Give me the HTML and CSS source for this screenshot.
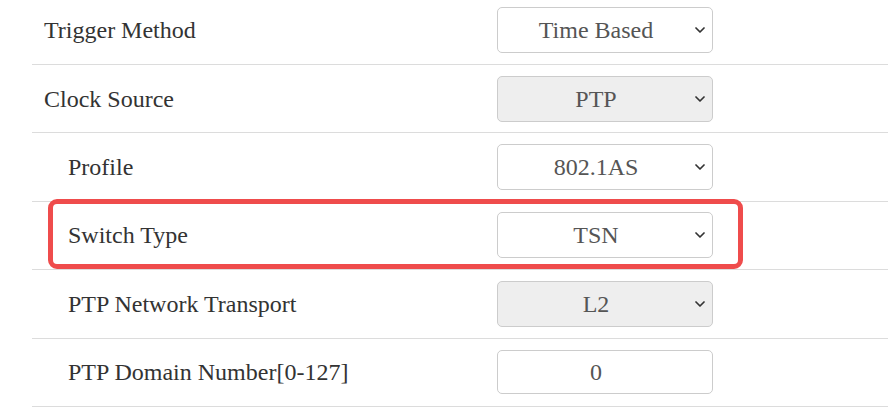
FILE: index.html
```html
<!DOCTYPE html>
<html>
<head>
<meta charset="utf-8">
<link rel="stylesheet" href="styles.css">
</head>
<body>
<div class="table">
  <div class="row">
    <div class="label">Trigger Method</div>
    <div class="field">
      <div class="select-wrap">
        <select class="select"><option>Time Based</option></select>
        <svg class="chev" viewBox="0 0 10 6" width="10" height="6"><path d="M1 1 L5 5 L9 1" fill="none" stroke="#333" stroke-width="1.7" stroke-linecap="round" stroke-linejoin="round"/></svg>
      </div>
    </div>
  </div>
  <div class="row">
    <div class="label">Clock Source</div>
    <div class="field">
      <div class="select-wrap">
        <select class="select disabled"><option>PTP</option></select>
        <svg class="chev" viewBox="0 0 10 6" width="10" height="6"><path d="M1 1 L5 5 L9 1" fill="none" stroke="#333" stroke-width="1.7" stroke-linecap="round" stroke-linejoin="round"/></svg>
      </div>
    </div>
  </div>
  <div class="row">
    <div class="label sub">Profile</div>
    <div class="field">
      <div class="select-wrap">
        <select class="select"><option>802.1AS</option></select>
        <svg class="chev" viewBox="0 0 10 6" width="10" height="6"><path d="M1 1 L5 5 L9 1" fill="none" stroke="#333" stroke-width="1.7" stroke-linecap="round" stroke-linejoin="round"/></svg>
      </div>
    </div>
  </div>
  <div class="row highlighted">
    <div class="label sub">Switch Type</div>
    <div class="field">
      <div class="select-wrap">
        <select class="select"><option>TSN</option></select>
        <svg class="chev" viewBox="0 0 10 6" width="10" height="6"><path d="M1 1 L5 5 L9 1" fill="none" stroke="#333" stroke-width="1.7" stroke-linecap="round" stroke-linejoin="round"/></svg>
      </div>
    </div>
    <div class="mark"></div>
  </div>
  <div class="row">
    <div class="label sub">PTP Network Transport</div>
    <div class="field">
      <div class="select-wrap">
        <select class="select disabled"><option>L2</option></select>
        <svg class="chev" viewBox="0 0 10 6" width="10" height="6"><path d="M1 1 L5 5 L9 1" fill="none" stroke="#333" stroke-width="1.7" stroke-linecap="round" stroke-linejoin="round"/></svg>
      </div>
    </div>
  </div>
  <div class="row">
    <div class="label sub">PTP Domain Number[0-127]</div>
    <div class="field">
      <input class="input" type="text" value="0">
    </div>
  </div>
</div>
</body>
</html>
```
FILE: styles.css
```css
html, body {
  margin: 0;
  padding: 0;
  background: #fff;
  overflow: hidden;
}
body {
  width: 888px;
  height: 410px;
  font-family: "Liberation Serif", "Times New Roman", serif;
}
.table {
  margin-top: -3.7px;
  margin-left: 32px;
  width: 900px;
}
.row {
  position: relative;
  display: grid;
  grid-template-columns: 453px 1fr;
  align-items: center;
  height: 68.48px;
  box-sizing: border-box;
  border-bottom: 1px solid #dcdcdc;
}
.label {
  padding-left: 12px;
  font-size: 24px;
  color: #333;
  line-height: 1;
}
.label.sub {
  padding-left: 36px;
}
.field {
  padding-left: 12px;
  display: flex;
  align-items: center;
}
.select-wrap {
  position: relative;
  width: 216px;
  height: 46px;
}
.select {
  appearance: none;
  -webkit-appearance: none;
  width: 216px;
  height: 46px;
  box-sizing: border-box;
  border: 1px solid #cccccc;
  border-radius: 5px;
  background: #fff;
  font-family: "Liberation Serif", "Times New Roman", serif;
  font-size: 24px;
  color: #555;
  padding: 0 30px 0 12px;
  text-align: center;
  text-align-last: center;
  margin: 0;
}
.select.disabled {
  background: #eeeeee;
}
.chev {
  position: absolute;
  right: 8px;
  top: 20px;
  pointer-events: none;
}
.input {
  width: 216px;
  height: 44px;
  box-sizing: border-box;
  border: 1px solid #cccccc;
  border-radius: 5px;
  background: #fff;
  font-family: "Liberation Serif", "Times New Roman", serif;
  font-size: 24px;
  color: #555;
  padding: 0 30px 0 12px;
  text-align: center;
  margin: 0;
}
.mark {
  position: absolute;
  left: 16px;
  top: -3px;
  width: 695px;
  height: 70px;
  box-sizing: border-box;
  border: 5px solid #ef4c4c;
  border-radius: 9px;
  pointer-events: none;
}
```
